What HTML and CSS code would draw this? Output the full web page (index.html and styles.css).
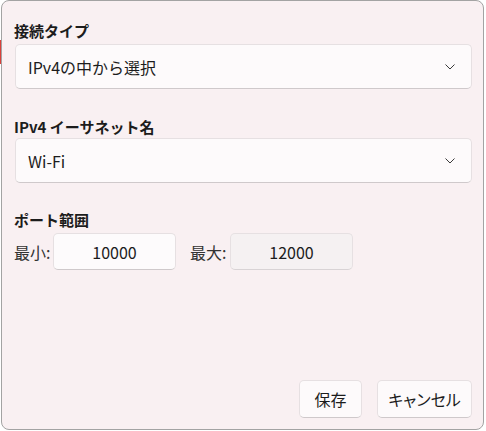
FILE: index.html
```html
<!DOCTYPE html>
<html lang="ja">
<head>
<meta charset="utf-8">
<link rel="stylesheet" href="styles.css">
</head>
<body>
<div class="dialog">
  <div class="group first">
    <div class="label">接続タイプ</div>
    <div class="combo">
      <span>IPv4の中から選択</span>
      <svg class="chev" width="10" height="6" viewBox="0 0 10 6"><path d="M0.5 0.5 L5 5 L9.5 0.5" fill="none" stroke="#3a3a3a" stroke-width="1"/></svg>
    </div>
  </div>
  <div class="group second">
    <div class="label">IPv4 イーサネット名</div>
    <div class="combo">
      <span>Wi-Fi</span>
      <svg class="chev" width="10" height="6" viewBox="0 0 10 6"><path d="M0.5 0.5 L5 5 L9.5 0.5" fill="none" stroke="#3a3a3a" stroke-width="1"/></svg>
    </div>
  </div>
  <div class="group third">
    <div class="label">ポート範囲</div>
    <div class="range">
      <span class="rlabel">最小:</span>
      <div class="num">10000</div>
      <span class="rlabel max">最大:</span>
      <div class="num dim">12000</div>
    </div>
  </div>
  <div class="actions">
    <div class="btn save">保存</div>
    <div class="btn cancel">キャンセル</div>
  </div>
</div>
</body>
</html>
```
FILE: styles.css
```css
html, body {
  margin: 0;
  padding: 0;
}
body {
  width: 486px;
  height: 431px;
  background: linear-gradient(#d9403a, #d9403a) 0 40px / 1px 24px no-repeat, #ffffff;
  font-family: "Noto Sans CJK JP", "Noto Sans", sans-serif;
  color: #1c1c1c;
  font-size: 15px;
}
.dialog {
  margin-left: 1px;
  width: 483px;
  height: 430px;
  box-sizing: border-box;
  border: 1px solid #a3a3a3;
  border-radius: 8px;
  background: #f9f0f2;
  padding: 20px 11px 11px 13px;
  display: flex;
  flex-direction: column;
}
.group {
  display: flex;
  flex-direction: column;
  gap: 3px;
}
.group.first { margin-bottom: 28px; }
.group.second { gap: 1px; margin-bottom: 27px; }
.label {
  font-weight: 700;
  line-height: 20px;
  margin-left: -1px;
}
.combo {
  height: 45px;
  box-sizing: border-box;
  border: 1px solid #e6e0e2;
  border-bottom-color: #cfc9cb;
  border-radius: 5px;
  background: #fdfafb;
  display: flex;
  align-items: center;
  justify-content: space-between;
  padding: 0 16px 0 12px;
  font-size: 16px;
}
.range {
  display: flex;
  align-items: center;
}
.rlabel {
  width: 39px;
  margin-left: -1px;
  color: #333;
  font-size: 16px;
}
.rlabel.max {
  margin-left: 14px;
  width: 40px;
}
.num {
  width: 123px;
  height: 37px;
  box-sizing: border-box;
  border: 1px solid #e6e0e2;
  border-bottom-color: #cfc9cb;
  border-radius: 5px;
  background: #fdfbfc;
  display: flex;
  align-items: center;
  justify-content: center;
  font-size: 16px;
}
.num.dim {
  background: #f5f1f2;
  border-bottom-color: #d8d3d5;
}
.actions {
  margin-top: auto;
  display: flex;
  justify-content: flex-end;
  gap: 15px;
}
.btn {
  height: 38px;
  box-sizing: border-box;
  border: 1px solid #e6e0e2;
  border-bottom-color: #cfc9cb;
  border-radius: 5px;
  background: #fdfafb;
  display: flex;
  align-items: center;
  justify-content: center;
  font-size: 16px;
  font-feature-settings: "palt";
}
.save { width: 63px; }
.cancel { width: 95px; }
```
